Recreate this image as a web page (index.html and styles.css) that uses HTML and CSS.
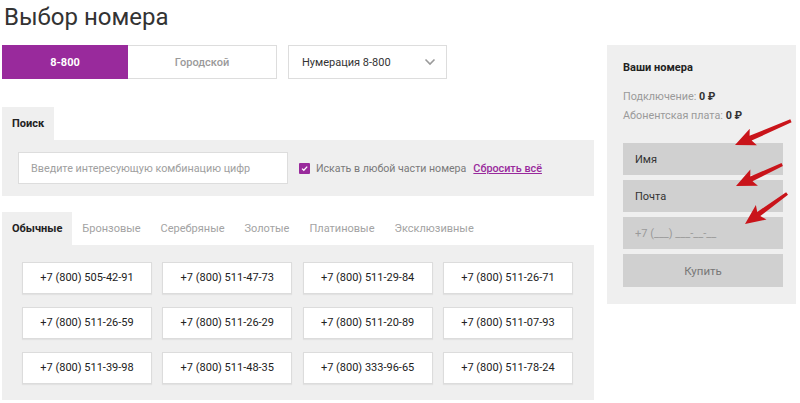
FILE: index.html
```html
<!DOCTYPE html>
<html>
  <head>
    <meta charset="UTF-8">
    <title>Выбор номера</title>
    <link rel="stylesheet" href="styles.css">
  </head>
  <body>
    <div id="page">
      <div id="main">
        <h1 class="title">Выбор номера</h1>

        <div class="controls">
          <div class="switch">
            <button class="switch-item active">8-800</button>
            <button class="switch-item">Городской</button>
          </div>
          <div class="select">
            <span>Нумерация 8-800</span>
            <svg class="chevron" width="12" height="8" viewBox="0 0 12 8">
              <path d="M1.5 1.5 L6 6 L10.5 1.5" fill="none" stroke="#9a9a9a" stroke-width="1.6"/>
            </svg>
          </div>
        </div>

        <div class="tabs search-tabs">
          <div class="tab active">Поиск</div>
        </div>
        <div class="panel search-panel">
          <input class="search-input" type="text" placeholder="Введите интересующую комбинацию цифр">
          <label class="check">
            <span class="check-box">
              <svg width="11" height="11" viewBox="0 0 11 11">
                <path d="M3 5.6 L4.8 7.3 L8.2 3.6" fill="none" stroke="#fff" stroke-width="1.3"/>
              </svg>
            </span>
            Искать в любой части номера
          </label>
          <a class="reset" href="#">Сбросить всё</a>
        </div>

        <div class="tabs">
          <div class="tab active">Обычные</div>
          <div class="tab">Бронзовые</div>
          <div class="tab">Серебряные</div>
          <div class="tab">Золотые</div>
          <div class="tab">Платиновые</div>
          <div class="tab">Эксклюзивные</div>
        </div>
        <div class="panel numbers">
          <div class="number">+7 (800) 505-42-91</div>
          <div class="number">+7 (800) 511-47-73</div>
          <div class="number">+7 (800) 511-29-84</div>
          <div class="number">+7 (800) 511-26-71</div>
          <div class="number">+7 (800) 511-26-59</div>
          <div class="number">+7 (800) 511-26-29</div>
          <div class="number">+7 (800) 511-20-89</div>
          <div class="number">+7 (800) 511-07-93</div>
          <div class="number">+7 (800) 511-39-98</div>
          <div class="number">+7 (800) 511-48-35</div>
          <div class="number">+7 (800) 333-96-65</div>
          <div class="number">+7 (800) 511-78-24</div>
        </div>
      </div>

      <div id="cart">
        <div class="cart-title">Ваши номера</div>
        <div class="cart-line">Подключение: <b>0 ₽</b></div>
        <div class="cart-line">Абонентская плата: <b>0 ₽</b></div>
        <div class="cart-form">
          <input class="field" type="text" placeholder="Имя">
          <input class="field" type="text" placeholder="Почта">
          <input class="field phone" type="text" placeholder="+7 (___) ___-__-__">
          <button class="buy">Купить</button>
        </div>
      </div>

      <!-- red pointer arrows drawn over the form -->
      <svg class="arrows" width="800" height="403" viewBox="0 0 800 403">
        <g fill="#c9141a">
          <polygon transform="translate(735 145) rotate(-23.5)" points="0,0 20,-9 17,-2.6 61,-1.6 61,1.6 17,2.6 20,9"/>
          <polygon transform="translate(736 186) rotate(-25)" points="0,0 20,-9 17,-2.6 51,-1.6 51,1.6 17,2.6 20,9"/>
          <polygon transform="translate(745 224) rotate(-36)" points="0,0 20,-9 17,-2.6 52,-1.6 52,1.6 17,2.6 20,9"/>
        </g>
      </svg>
    </div>
  </body>
</html>
```

FILE: styles.css
```css
/* Page layout */
body {
  margin: 0;
  font-family: Roboto, "Open Sans", sans-serif;
  color: #333;
  background: #fff;
}

#page {
  position: relative;
  display: flex;
  align-items: flex-start;
  gap: 13px;
  padding-left: 2px;
  width: 800px;
  height: 403px;
  box-sizing: border-box;
  overflow: hidden;
}

#main {
  width: 592px;
}

.title {
  margin: 0;
  padding: 1px 0 0 2px;
  font-size: 24px;
  font-weight: 400;
  line-height: 32px;
  color: #333;
}

/* Switch and select */
.controls {
  display: flex;
  gap: 11px;
  margin-top: 12px;
}

.switch {
  display: flex;
  width: 275px;
  height: 34px;
}

.switch-item {
  flex: 1;
  border: 1px solid #ddd;
  background: #fff;
  font-family: inherit;
  font-size: 11px;
  font-weight: 500;
  color: #9a9a9a;
  cursor: pointer;
}

.switch-item.active {
  flex: 0 0 126px;
  background: #992a9c;
  border-color: #992a9c;
  color: #fff;
  font-weight: 700;
}

.switch-item + .switch-item {
  border-left: none;
}

.select {
  display: flex;
  align-items: center;
  justify-content: space-between;
  width: 159px;
  height: 34px;
  padding: 0 10px 0 13px;
  box-sizing: border-box;
  border: 1px solid #ddd;
  font-size: 11px;
  color: #333;
}

/* Tabs */
.tabs {
  display: flex;
  margin-top: 16px;
}

.search-tabs {
  margin-top: 28px;
}

.tab {
  height: 33px;
  line-height: 33px;
  padding: 0 10px;
  font-size: 11px;
  color: #a3a3a3;
}

.tab.active {
  background: #efefef;
  color: #222;
  font-weight: 700;
}

.panel {
  background: #efefef;
}

/* Search */
.search-panel {
  display: flex;
  align-items: center;
  height: 56px;
  padding: 0 16px;
  box-sizing: border-box;
}

.search-input {
  width: 270px;
  height: 32px;
  padding: 0 12px;
  box-sizing: border-box;
  border: 1px solid #ddd;
  font-family: inherit;
  font-size: 10.8px;
  outline: none;
}

.search-input::placeholder {
  color: #a0a0a0;
}

.check {
  display: flex;
  align-items: center;
  gap: 6px;
  margin-left: 11px;
  font-size: 10.6px;
  color: #7a7a7a;
}

.check-box {
  display: flex;
  width: 11px;
  height: 11px;
  background: #992a9c;
  border-radius: 1px;
}

.reset {
  margin-left: 7px;
  font-size: 10.8px;
  font-weight: 500;
  color: #992a9c;
}

/* Numbers */
.numbers {
  display: grid;
  grid-template-columns: repeat(4, 130px);
  column-gap: 10.3px;
  row-gap: 13px;
  padding: 17px 20px 16px;
}

.number {
  height: 32px;
  line-height: 30px;
  box-sizing: border-box;
  border: 1px solid #dcdcdc;
  background: #fff;
  text-align: center;
  font-size: 11px;
  color: #222;
  box-shadow: 0 1px 1px rgba(0, 0, 0, 0.05);
}

/* Cart */
#cart {
  width: 189px;
  margin-top: 45px;
  padding: 16px 13px 17px 16px;
  box-sizing: border-box;
  background: #efefef;
}

.cart-title {
  font-size: 11px;
  font-weight: 700;
  line-height: 14px;
  color: #222;
}

.cart-line {
  font-size: 10.8px;
  line-height: 19px;
  color: #9a9a9a;
}

.cart-title + .cart-line {
  margin-top: 12px;
}

.cart-line b {
  color: #333;
}

.cart-form {
  display: flex;
  flex-direction: column;
  gap: 5px;
  margin-top: 18px;
}

.field {
  height: 32px;
  padding: 0 12px;
  border: none;
  background: #d0d0d0;
  font-family: inherit;
  font-size: 11px;
  outline: none;
}

.field::placeholder {
  color: #333;
}

.field.phone::placeholder {
  color: #9a9a9a;
}

.buy {
  height: 33px;
  border: none;
  background: #d0d0d0;
  font-family: inherit;
  font-size: 11.5px;
  color: #777;
}

.arrows {
  position: absolute;
  left: 0;
  top: 0;
  pointer-events: none;
}
```
